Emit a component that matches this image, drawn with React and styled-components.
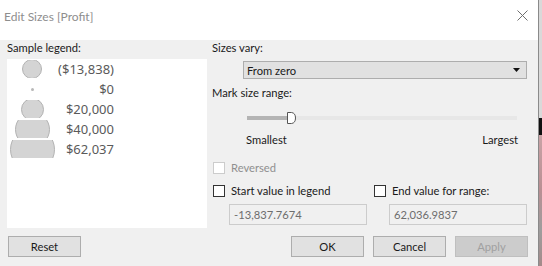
import React from "react";
import styled, { createGlobalStyle } from "styled-components";

const GlobalStyle = createGlobalStyle`
    html, body {
        margin: 0;
        padding: 0;
        background: #f0f0f0;
    }
    body {
        font-family: Lato, "Noto Sans", sans-serif;
        font-size: 11.2px;
        color: #1a1a1a;
    }
`;

const Page = styled.div`
    display: flex;
    width: 542px;
    height: 266px;
    overflow: hidden;
`;

const Dialog = styled.div`
    width: 538px;
    height: 266px;
    border-right: 1px solid #8a8a8a;
    background: #f0f0f0;
    display: flex;
    flex-direction: column;
`;

const Backdrop = styled.div`
    flex: 1;
    background: linear-gradient(
        to bottom,
        #d9d9d9 0px,
        #d9d9d9 118px,
        #111 118px,
        #111 135px,
        #c9a3a6 135px,
        #b98f93 190px,
        #9d9d9d 230px,
        #a58a8a 266px
    );
`;

const TitleBar = styled.div`
    height: 40px;
    background: #fff;
    display: flex;
    align-items: center;
    justify-content: space-between;
    padding: 0 10px 0 4px;
    box-sizing: border-box;
`;

const Title = styled.span`
    color: #8e8e8e;
    font-size: 12px;
    margin-top: -8px;
`;

const CloseIcon = styled.svg`
    width: 11px;
    height: 11px;
    margin-top: -10px;
`;

const Content = styled.div`
    display: flex;
    padding-left: 7px;
    height: 188px;
`;

const LeftPane = styled.div`
    width: 200px;
    display: flex;
    flex-direction: column;
`;

const Label = styled.div`
    line-height: 16px;
    height: 16px;
    white-space: nowrap;
`;

const LegendBox = styled.div`
    margin-top: 3px;
    height: 169px;
    background: #fff;
    box-sizing: border-box;
`;

const LegendRow = styled.div`
    display: flex;
    align-items: center;
    height: 20px;
`;

const MarkCell = styled.div`
    width: 48px;
    margin-left: 1px;
    height: 18px;
    overflow: hidden;
    display: flex;
    align-items: center;
    justify-content: center;
`;

const Mark = styled.div`
    flex: none;
    width: ${(p) => p.$d}px;
    height: ${(p) => p.$d}px;
    border-radius: 50%;
    box-sizing: border-box;
    background: ${(p) => (p.$d > 4 ? "#d4d4d4" : "#b8b8b8")};
    border: ${(p) => (p.$d > 4 ? "1.5px solid #b3b3b3" : "none")};
`;

const LegendValue = styled.div`
    width: 58px;
    text-align: right;
    font-family: "Noto Sans", sans-serif;
    font-size: 13px;
    color: #5a5a5a;
    white-space: nowrap;
`;

const RightPane = styled.div`
    margin-left: 5px;
    width: 316px;
    display: flex;
    flex-direction: column;
`;

const Select = styled.div`
    margin: 5px 0 0 31px;
    width: 284px;
    height: 18px;
    box-sizing: border-box;
    border: 1px solid #adadad;
    background: #e1e1e1;
    display: flex;
    align-items: center;
    justify-content: space-between;
    padding: 0 6px 0 3px;
`;

const SectionLabel = styled(Label)`
    margin-top: 6px;
`;

const Slider = styled.div`
    margin: 10px 0 0 35px;
    width: 270px;
    height: 14px;
    position: relative;
    display: flex;
    align-items: center;
`;

const TrackFill = styled.div`
    width: 41px;
    height: 4px;
    background: #b4b4b4;
`;

const TrackRest = styled.div`
    flex: 1;
    height: 4px;
    background: #e7e7e7;
`;

const Thumb = styled.svg`
    position: absolute;
    left: 40px;
    top: 1px;
    width: 9px;
    height: 12px;
`;

const RangeLabels = styled.div`
    margin: 7px 0 0 34px;
    width: 272px;
    display: flex;
    justify-content: space-between;
    line-height: 16px;
`;

const CheckRow = styled.div`
    display: grid;
    grid-template-columns: 161px 1fr;
    margin-top: ${(p) => p.$top}px;
`;

const Check = styled.label`
    display: flex;
    align-items: center;
    gap: 6px;
    height: 13px;
    padding-left: 1px;
    white-space: nowrap;
    color: ${(p) => (p.$disabled ? "#8f8f8f" : "#1a1a1a")};
`;

const Box = styled.span`
    width: 12px;
    height: 12px;
    box-sizing: border-box;
    border: 1px solid ${(p) => (p.$disabled ? "#cccccc" : "#333")};
    background: #fff;
`;

const Field = styled.div`
    margin-left: ${(p) => p.$left}px;
    width: 138px;
    height: 21px;
    box-sizing: border-box;
    border: 1px solid #cccccc;
    background: #f0f0f0;
    color: #6d6d6d;
    display: flex;
    align-items: center;
    padding-left: 4px;
`;

const Footer = styled.div`
    display: flex;
    align-items: center;
    padding: 0 10px 0 8px;
    margin-top: 8px;
`;

const Spacer = styled.div`
    flex: 1;
`;

const Button = styled.div`
    width: 73px;
    height: 21px;
    box-sizing: border-box;
    border: 1px solid ${(p) => (p.$disabled ? "#bfbfbf" : "#adadad")};
    background: ${(p) => (p.$disabled ? "#cccccc" : "#e1e1e1")};
    color: ${(p) => (p.$disabled ? "#a0a0a0" : "#1a1a1a")};
    display: flex;
    align-items: center;
    justify-content: center;
    margin-left: ${(p) => p.$gap || 0}px;
`;

const legend = [
    { d: 20, label: "($13,838)" },
    { d: 3, label: "$0" },
    { d: 23, label: "$20,000" },
    { d: 35, label: "$40,000" },
    { d: 45, label: "$62,037" },
];

export default function App() {
    return (
        <>
            <GlobalStyle />
            <Page>
                <Dialog>
                    <TitleBar>
                        <Title>Edit Sizes [Profit]</Title>
                        <CloseIcon viewBox="0 0 11 11">
                            <path d="M0.5 0.5 L10.5 10.5 M10.5 0.5 L0.5 10.5" stroke="#6f6f6f" strokeWidth="1" />
                        </CloseIcon>
                    </TitleBar>
                    <Content>
                        <LeftPane>
                            <Label>Sample legend:</Label>
                            <LegendBox>
                                {legend.map((row) => (
                                    <LegendRow key={row.label}>
                                        <MarkCell>
                                            <Mark $d={row.d} />
                                        </MarkCell>
                                        <LegendValue>{row.label}</LegendValue>
                                    </LegendRow>
                                ))}
                            </LegendBox>
                        </LeftPane>
                        <RightPane>
                            <Label>Sizes vary:</Label>
                            <Select>
                                <span>From zero</span>
                                <svg width="7" height="4" viewBox="0 0 7 4">
                                    <path d="M0 0 H7 L3.5 4 Z" fill="#111" />
                                </svg>
                            </Select>
                            <SectionLabel>Mark size range:</SectionLabel>
                            <Slider>
                                <TrackFill />
                                <TrackRest />
                                <Thumb viewBox="0 0 9 12">
                                    <path d="M0.5 0.5 H4.5 Q8.5 1 8.5 6 Q8.5 11 4.5 11.5 H0.5 Z" fill="#fff" stroke="#555" strokeWidth="1" />
                                </Thumb>
                            </Slider>
                            <RangeLabels>
                                <span>Smallest</span>
                                <span>Largest</span>
                            </RangeLabels>
                            <CheckRow $top={13}>
                                <Check $disabled>
                                    <Box $disabled />
                                    Reversed
                                </Check>
                            </CheckRow>
                            <CheckRow $top={10}>
                                <Check>
                                    <Box />
                                    Start value in legend
                                </Check>
                                <Check>
                                    <Box />
                                    End value for range:
                                </Check>
                            </CheckRow>
                            <CheckRow $top={7}>
                                <Field $left={17}>-13,837.7674</Field>
                                <Field $left={16}>62,036.9837</Field>
                            </CheckRow>
                        </RightPane>
                    </Content>
                    <Footer>
                        <Button>Reset</Button>
                        <Spacer />
                        <Button>OK</Button>
                        <Button $gap={9}>Cancel</Button>
                        <Button $gap={9} $disabled>Apply</Button>
                    </Footer>
                </Dialog>
                <Backdrop />
            </Page>
        </>
    );
}
